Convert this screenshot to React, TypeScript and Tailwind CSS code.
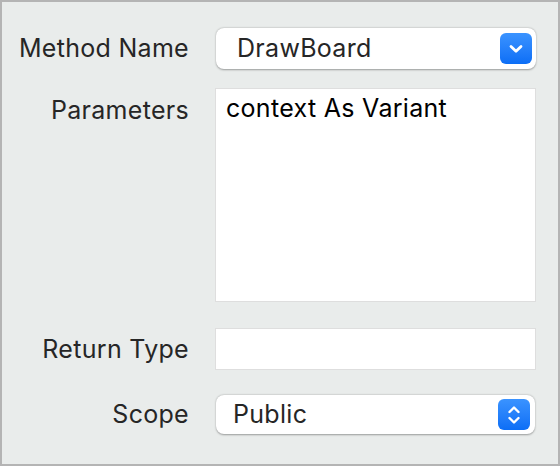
import React from 'react';

/* -------------------------------------------------------------------------- */
/*  Method editor panel                                                       */
/* -------------------------------------------------------------------------- */

const ChevronDown: React.FC = () => (
  <svg width="16" height="12" viewBox="0 0 16 12" fill="none">
    <path d="M3 3.5 L8 8.3 L13 3.5" stroke="white" strokeWidth="2.8" strokeLinecap="round" strokeLinejoin="round" />
  </svg>
);

const Stepper: React.FC = () => (
  <svg width="16" height="26" viewBox="0 0 16 26" fill="none">
    <path d="M3.5 10 L8 5.5 L12.5 10" stroke="white" strokeWidth="2.4" strokeLinecap="round" strokeLinejoin="round" />
    <path d="M3.5 16 L8 20.5 L12.5 16" stroke="white" strokeWidth="2.4" strokeLinecap="round" strokeLinejoin="round" />
  </svg>
);

const Label: React.FC<{ children: React.ReactNode; className?: string }> = ({ children, className = '' }) => (
  <div className={`w-[187px] text-right text-[25px] tracking-[0.3px] text-[#262626] leading-none ${className}`}>{children}</div>
);

const App: React.FC = () => {
  return (
    <div
      className="w-[560px] h-[466px] border-2 border-[#b4b4b4] bg-[#e9eceb] flex flex-col pt-[26px]"
      style={{ fontFamily: 'Inter, "Noto Sans", sans-serif' }}
    >
      {/* Method Name */}
      <div className="flex items-center">
        <Label>Method Name</Label>
        <div className="ml-[27px] w-[320px] h-[41px] rounded-[8px] bg-white shadow-[0_0.5px_2px_rgba(0,0,0,0.35)] flex items-center pl-[21px] pr-[4px]">
          <span className="flex-1 text-[25px] tracking-[0.3px] text-[#262626] leading-none">DrawBoard</span>
          <div className="w-[32px] h-[31px] rounded-[6px] bg-gradient-to-b from-[#3a93ff] to-[#0b6ef6] flex items-center justify-center">
            <ChevronDown />
          </div>
        </div>
      </div>

      {/* Parameters */}
      <div className="flex items-start mt-[19px]">
        <Label className="pt-[10px]">Parameters</Label>
        <div className="ml-[26px] w-[321px] h-[214px] bg-white border border-[#dedede] px-[10px] pt-[7px] text-[25px] tracking-[0.3px] text-black leading-none">
          context As Variant
        </div>
      </div>

      {/* Return Type */}
      <div className="flex items-center mt-[26px]">
        <Label>Return Type</Label>
        <div className="ml-[26px] w-[321px] h-[42px] bg-white border border-[#dedede]" />
      </div>

      {/* Scope */}
      <div className="flex items-center mt-[25px]">
        <Label>Scope</Label>
        <div className="ml-[27px] w-[319px] h-[39px] rounded-[8px] bg-white shadow-[0_0.5px_2px_rgba(0,0,0,0.35)] flex items-center pl-[17px] pr-[5px]">
          <span className="flex-1 text-[25px] tracking-[0.3px] text-[#262626] leading-none">Public</span>
          <div className="w-[32px] h-[31px] rounded-[6px] bg-gradient-to-b from-[#3a93ff] to-[#0b6ef6] flex items-center justify-center">
            <Stepper />
          </div>
        </div>
      </div>
    </div>
  );
};

export default App;
